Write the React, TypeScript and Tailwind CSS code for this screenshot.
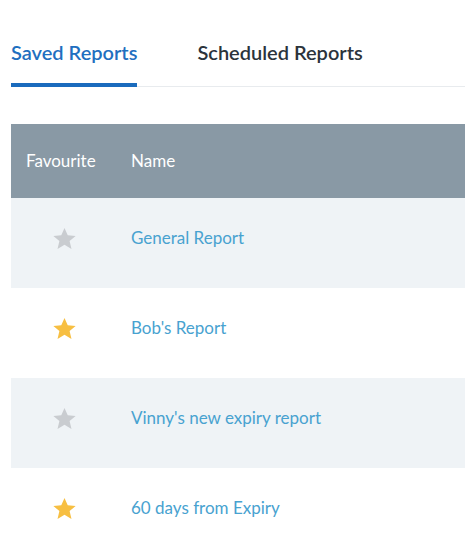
import React from "react";

const Star = ({ filled }: { filled: boolean }) => (
  <svg width="25" height="25" viewBox="0 0 24 24" className={filled ? "fill-[#f7bf42]" : "fill-[#c9ccd0]"}>
    <path d="M12 1.8l3.1 7.1 7.6.6-5.8 5 1.8 7.5L12 18l-6.7 4 1.8-7.5-5.8-5 7.6-.6z" />
  </svg>
);

const rows = [
  { name: "General Report", fav: false },
  { name: "Bob's Report", fav: true },
  { name: "Vinny's new expiry report", fav: false },
  { name: "60 days from Expiry", fav: true },
];

export default function App() {
  return (
    <div className="w-[465px] h-[544px] overflow-hidden bg-white pl-[11px] font-['Lato',sans-serif]">
      <div className="flex border-b border-[#e8ebee] pt-[38px]">
        <div className="border-b-4 border-[#1a6bbd] pb-[17px] mb-[-1px] text-[20px] font-semibold text-[#1f6fc0] leading-[28px]">
          Saved Reports
        </div>
        <div className="ml-[60px] pb-[17px] text-[20px] font-semibold text-[#2b333b] leading-[28px]">
          Scheduled Reports
        </div>
      </div>
      <div className="mt-[37px]">
        <div className="flex h-[74px] items-center bg-[#8999a5] text-[17px] text-white">
          <div className="w-[120px] pl-[15px]">Favourite</div>
          <div>Name</div>
        </div>
        {rows.map((r, i) => (
          <div key={i} className={`flex h-[90px] items-center pb-[10px] text-[17px] ${i % 2 === 0 ? "bg-[#eff3f6]" : "bg-white"}`}>
            <div className="w-[120px] flex justify-center pr-[14px]">
              <Star filled={r.fav} />
            </div>
            <div className="text-[#48a2d0]">{r.name}</div>
          </div>
        ))}
      </div>
    </div>
  );
}
